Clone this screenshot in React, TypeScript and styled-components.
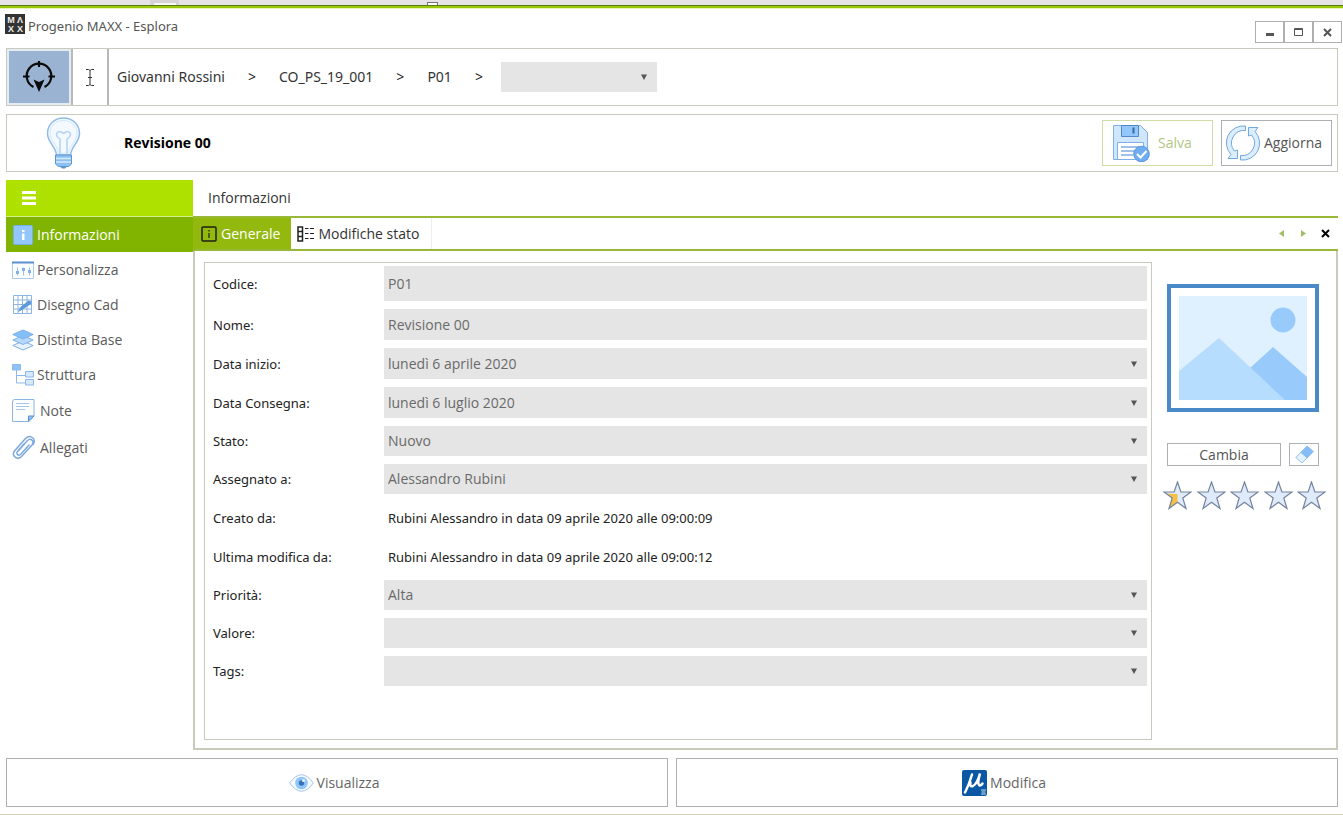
import React from "react";
import styled, { createGlobalStyle } from "styled-components";

const GlobalStyle = createGlobalStyle`
  *, *::before, *::after { box-sizing: border-box; }
  body { margin: 0; background: #fff; }
  body, button, input, select {
    font-family: "Open Sans", "Noto Sans", "Liberation Sans", sans-serif;
    font-size: 14px;
    line-height: 20px;
    color: #222;
  }
  svg { display: block; flex: none; }
`;

const wide = `"Noto Sans", "Open Sans", "Liberation Sans", sans-serif`;

const c = {
  green: "#93b90f",
  rule: "#9ab838",
  selected: "#80b400",
  lime: "#aee000",
  frame: "#c9c9be",
  frameThick: "#c9cabb",
  button: "#adafb2",
  field: "#e5e5e5",
  muted: "#6a6a6a",
};

/* ---------- window ---------- */

const Window = styled.div`
  display: flex;
  flex-direction: column;
  min-height: 100vh;
  border-bottom: 1px solid #cfd3a6;
`;

const Backdrop = styled.div`
  display: flex;
  height: 5px;
  padding-left: 150px;
  background: #e6e4e6;
`;

const BackdropTab = styled.span`
  width: 29px;
  margin-right: 248px;
  background: #f8f8f8;
  border: solid #d6d4d6;
  border-width: 3px 3px 0 4px;
`;

const BackdropBox = styled.span`
  width: 11px;
  margin-top: 2px;
  background: #fff;
  border: 1px solid #777;
  border-bottom: 0;
`;

const TitleBar = styled.header`
  display: flex;
  height: 43px;
  padding: 6px 1px 5px 5px;
  border-top: 3px solid #9cc80c;
  box-shadow: inset 0 1px 0 #e9f5b8;
`;

const DarkLine = styled.div`
  height: 1px;
  margin-bottom: -1px;
  background: #5b7a10;
  z-index: 1;
`;

const AppTitle = styled.h1`
  flex: 1;
  margin: 0;
  padding-left: 3px;
  font-family: ${wide};
  font-size: 13px;
  font-weight: 400;
  line-height: 24px;
  color: #555;
`;

const WindowControls = styled.div`
  display: flex;
  align-self: flex-end;
`;

const WindowButton = styled.button`
  display: grid;
  place-items: center;
  width: 29px;
  height: 22px;
  padding: 0;
  background: #fff;
  border: 1px solid ${c.button};
`;

const Content = styled.div`
  display: flex;
  flex: 1;
  flex-direction: column;
  gap: 8px;
  padding: 0 5px 7px 6px;
`;

const Bar = styled.section`
  display: flex;
  align-items: center;
  height: 58px;
  border: 1px solid ${c.frame};
`;

/* ---------- breadcrumb ---------- */

const ModeButton = styled.button<{ $on?: boolean }>`
  display: grid;
  place-items: center;
  align-self: stretch;
  width: ${(p) => (p.$on ? 66 : 36)}px;
  padding: 0;
  background: ${(p) => (p.$on ? "#9ab3d2" : "#fff")};
  border: 0;
  border-right: 2px solid #b9bab6;
  box-shadow: ${(p) => (p.$on ? "inset 0 0 0 2px #e3ebf3" : "none")};
`;

const Crumbs = styled.nav`
  display: flex;
  align-items: center;
  gap: 18px;
  padding-left: 3px;
  font-family: ${wide};
`;

const Crumb = styled.a`
  padding: 0 5px;
  color: #333;
  text-decoration: none;
`;

/* ---------- heading ---------- */

const HeadIcon = styled.div`
  padding-left: 39px;
`;

const RecordTitle = styled.h2`
  flex: 1;
  margin: 0;
  padding-left: 43px;
  font-size: 14px;
  font-weight: 700;
  color: #000;
`;

const HeadButtons = styled.div`
  display: flex;
  gap: 8px;
  padding-right: 5px;
`;

const HeadButton = styled.button`
  display: flex;
  align-items: center;
  gap: 3px;
  width: 111px;
  height: 46px;
  padding: 0 3px;
  color: #555;
  background: #fff;
  border: 1px solid ${c.button};
  &:disabled {
    gap: 8px;
    padding-left: 9px;
    color: #b2c583;
    border-color: #cfdca6;
  }
`;

/* ---------- sidebar ---------- */

const Workspace = styled.div`
  display: flex;
  flex: 1;
`;

const Sidebar = styled.nav`
  width: 187px;
  flex: none;
`;

const MenuToggle = styled.button`
  display: flex;
  align-items: center;
  width: 100%;
  height: 37px;
  padding: 0 16px;
  background: ${c.lime};
  border: 0;
  border-bottom: 1px solid #d5ee8c;
`;

const NavItem = styled.a<{ $active?: boolean; $tall?: boolean }>`
  display: flex;
  align-items: center;
  gap: ${(p) => (p.$tall ? 5 : 3)}px;
  height: ${(p) => (p.$tall ? 37 : 35)}px;
  padding-left: 6px;
  color: ${(p) => (p.$active ? "#fff" : "#5a5a5a")};
  background: ${(p) => (p.$active ? c.selected : "transparent")};
  text-decoration: none;
`;

/* ---------- main panel ---------- */

const Main = styled.main`
  display: flex;
  flex: 1;
  flex-direction: column;
`;

const PanelTitle = styled.h3`
  height: 36px;
  margin: 0;
  padding-left: 15px;
  font-size: 14px;
  font-weight: 400;
  line-height: 36px;
  color: #333;
`;

const TabStrip = styled.div`
  display: flex;
  align-items: stretch;
  height: 35px;
  border: solid ${c.rule};
  border-width: 2px 0;
`;

const Tab = styled.button<{ $active?: boolean }>`
  display: flex;
  align-items: center;
  gap: 4px;
  padding: ${(p) => (p.$active ? "0 10px 0 8px" : "0 12px 0 6px")};
  color: ${(p) => (p.$active ? "#fff" : "#333")};
  background: ${(p) => (p.$active ? c.green : "#fff")};
  border: 0;
  border-right: 1px solid ${(p) => (p.$active ? c.green : "#eee")};
`;

const TabTools = styled.div`
  display: flex;
  align-items: center;
  gap: 10px;
  margin-left: auto;
  padding-right: 7px;
`;

const ToolButton = styled.button`
  display: grid;
  place-items: center;
  width: 12px;
  height: 20px;
  padding: 0;
  background: none;
  border: 0;
`;

const PanelBody = styled.div`
  display: flex;
  flex: 1;
  padding: 11px 0 8px 9px;
  border: 2px solid ${c.frameThick};
  border-top: 0;
`;

const Form = styled.form`
  display: flex;
  flex: 1;
  flex-direction: column;
  gap: 8px;
  padding: 3px 4px 40px 8px;
  border: 1px solid ${c.frame};
`;

const Row = styled.div<{ $h: number }>`
  display: flex;
  align-items: center;
  height: ${(p) => p.$h}px;
`;

const Label = styled.label`
  flex: none;
  width: 171px;
  font-family: ${wide};
  font-size: 13px;
`;

const TextField = styled.input`
  flex: 1;
  min-width: 0;
  height: 100%;
  padding: 0 4px;
  color: ${c.muted};
  background: ${c.field};
  border: 0;
  border-radius: 0;
`;

const Output = styled.output`
  padding-left: 4px;
  font-family: ${wide};
  font-size: 13px;
`;

const Combo = styled.div<{ $w?: number }>`
  display: grid;
  flex: ${(p) => (p.$w ? "none" : "1")};
  align-items: center;
  width: ${(p) => (p.$w ? p.$w + "px" : "auto")};
  height: ${(p) => (p.$w ? "30px" : "100%")};
  & > * { grid-area: 1 / 1; }
  & > svg { justify-self: end; margin-right: 10px; pointer-events: none; }
`;

const Select = styled.select`
  appearance: none;
  width: 100%;
  height: 100%;
  padding: 0 24px 0 4px;
  color: ${c.muted};
  background: ${c.field};
  border: 0;
  border-radius: 0;
`;

/* ---------- preview column ---------- */

const Preview = styled.aside`
  flex: none;
  width: 184px;
  padding: 22px 10px 0 11px;
`;

const PictureFrame = styled.div`
  width: 152px;
  height: 128px;
  margin: 0 0 31px 4px;
  padding: 8px;
  border: 4px solid #4a8ac8;
`;

const PreviewActions = styled.div`
  display: flex;
  gap: 8px;
  margin: 0 7px 15px 4px;
`;

const SmallButton = styled.button<{ $grow?: boolean }>`
  display: grid;
  place-items: center;
  flex: ${(p) => (p.$grow ? "1" : "0 0 30px")};
  height: 23px;
  padding: 0;
  color: #555;
  background: #fff;
  border: 1px solid ${c.button};
`;

const Stars = styled.div`
  display: flex;
  justify-content: space-between;
`;

/* ---------- footer ---------- */

const Footer = styled.footer`
  display: flex;
  gap: 8px;
`;

const FooterButton = styled.button`
  display: flex;
  flex: 1;
  align-items: center;
  justify-content: center;
  gap: 3px;
  height: 49px;
  padding: 0 12px 0 6px;
  color: #666;
  background: #fff;
  border: 1px solid ${c.button};
`;

/* ---------- drawings ---------- */

const line = "#6b9fdb";
const sky = "#93c7fb";
const pale = "#dceefe";

const Caret = () => (
  <svg width="6" height="6" viewBox="0 0 6 6"><path d="M0 .5h6L3 6z" fill="#555" /></svg>
);

const Logo = () => (
  <svg width="20" height="20" viewBox="0 0 20 20">
    <rect width="20" height="20" fill="#333" />
    <g fill="#eee" fontFamily="Liberation Sans, sans-serif" fontSize="9" fontWeight="700" textAnchor="middle">
      <text x="6" y="9">M</text>
      <text x="15" y="9">Λ</text>
      <text x="6" y="18">X</text>
      <text x="15" y="18">X</text>
    </g>
  </svg>
);

const Target = () => (
  <svg width="32" height="32" viewBox="0 0 32 32" fill="none" stroke="#0a0a0a" strokeWidth="2.200">
    <path d="M10.500 26A12.300 12.300 0 1 1 21.500 26" />
    <path d="M16 0v6M0 15.500h6.500M25.500 15.500H32" />
    <path d="M16 31l-5.500-12.500L16 21l5.500-2.500z" fill="#0a0a0a" stroke="none" />
  </svg>
);

const TextCursor = () => (
  <svg width="10" height="19" viewBox="0 0 10 19" fill="none" stroke="#333">
    <path d="M1 1.500h2.500l1.500 1 1.500-1H9M1 17.500h2.500l1.500-1 1.500 1H9M5 2.500v14M3 9.500h4" />
  </svg>
);

const Bulb = () => (
  <svg width="35" height="52" viewBox="0 0 35 52" fill="none">
    <path d="M17.500 1C8 1 1.500 8 1.500 16.500c0 9 8 12 9 21.500h14c1-9.500 9-12.500 9-21.500C33.500 8 27 1 17.500 1z" fill="#f3f9ff" stroke="#8fbbe9" strokeWidth="1.500" />
    <path d="M17.500 3.500C10 3.500 4 9 4 16.500c0 7 7.500 12 8.500 19.500h10c1-7.500 8.500-12.500 8.500-19.500 0-7.500-6-13-13.500-13z" stroke="#d3e7fb" />
    <path d="M14 37V22l-2.500-2c-2.500-3 .5-6.500 3.500-5l2.500 1.500L20 15c3-1.500 6 2 3.500 5L21 22v15" stroke="#b5d4f5" strokeWidth="1.500" />
    <path d="M9.500 38h16v9l-3 2.500h-10l-3-2.500z" fill="#8dc0f5" stroke="#5f95cf" />
    <path d="M10 41.500h15M10 45h15" stroke="#d6eafe" strokeWidth="1.500" />
    <path d="M14 49.500h7l-2 2h-3z" fill="#5f95cf" />
  </svg>
);

const Floppy = () => (
  <svg width="38" height="38" viewBox="0 0 38 38" fill="none" stroke={line}>
    <path d="M1.500 1.500h27l7 7v27h-34z" fill="#cfe6fd" stroke="#7fafe4" />
    <path d="M9.500 1.500h17v11h-17z" fill={sky} stroke="#5489c6" />
    <path d="M21.500 3.500v6" stroke="#37689f" strokeWidth="2" />
    <path d="M5.500 18.500h26v17h-26z" fill="#fff" stroke="#7fafe4" />
    <path d="M9 23h19M9 27h13M9 31h12" stroke="#7fafe4" strokeWidth="1.500" />
    <circle cx="29.500" cy="30" r="7.800" fill="#6fadf0" stroke="#5b98da" />
    <path d="M25 30l3.500 3.500 6-6.500" stroke="#fff" strokeWidth="2" />
  </svg>
);

const Refresh = () => (
  <svg width="36" height="36" viewBox="0 0 36 36" fill={pale} stroke="#72a7df">
    <path d="M20.500 1A17 17 0 0 0 6 29.500L3 33.500h9.500V25l-3 1A12.500 12.500 0 0 1 20.500 5.500z" />
    <path d="M15.500 35A17 17 0 0 0 30 6.500L33 2.500h-9.500V11l3-1A12.500 12.500 0 0 1 15.500 30.500z" />
  </svg>
);

const Burger = () => (
  <svg width="14" height="14" viewBox="0 0 14 14"><path d="M0 0h14v3H0zM0 5.500h14v3H0zM0 11h14v3H0z" fill="#fff" /></svg>
);

const InfoTile = () => (
  <svg width="22" height="22" viewBox="0 0 22 22">
    <rect x="1.500" y="1.500" width="19" height="19" rx="1" fill={sky} stroke="#74aee8" />
    <path d="M10 6h2.500v2H10zM10 9.500h2.500V16H10z" fill="#fff" />
  </svg>
);

const Sliders = () => (
  <svg width="22" height="22" viewBox="0 0 22 22" fill="none" stroke="#8db4e0">
    <path d="M.5 3.500h21v16H.5z" fill="#fbfdff" stroke="#b0cbea" />
    <path d="M0 3.500h22" stroke="#5a8fce" strokeWidth="2" />
    <path d="M5.500 8.500v8M11.500 8.500v8M17.500 8.500v8" stroke="#9dbfe6" />
    <path d="M4 12h3v3H4zM10 9h3v3h-3zM16 11h3v3h-3z" fill="#84b0e3" stroke="none" />
  </svg>
);

const Grid = () => (
  <svg width="22" height="22" viewBox="0 0 22 22" fill="none" stroke="#8db5e2">
    <path d="M1.500 1.500h18v18h-18zM6 1v19M10.500 1v19M15 1v19M1 6h19M1 10.500h19M1 15h19" />
    <path d="M6 18l2-4.500 8.500-7 3 1-.5 2.500-9 6z" fill="#5f9ad8" stroke="none" />
  </svg>
);

const Layers = () => (
  <svg width="22" height="22" viewBox="0 0 22 22" stroke="#7fb0e6">
    <path d="M.8 16.500L11 12l10.200 4.500L11 21z" fill="#e6f2fe" />
    <path d="M.8 11L11 6.500 21.200 11 11 15.500z" fill="#b5d9fc" />
    <path d="M.8 5.500L11 1l10.200 4.500L11 10z" fill="#84bff9" />
  </svg>
);

const Tree = () => (
  <svg width="22" height="22" viewBox="0 0 22 22" fill="#d5e9fd" stroke="#8db9ea">
    <path d="M4.500 6v13h9M4.500 11.500h9" fill="none" />
    <path d="M.5.5h8v5.500h-8z" fill="#8fc2f7" />
    <path d="M13.500 7.500h8v5.500h-8zM13.500 15.500h8V21h-8z" />
  </svg>
);

const NoteIcon = () => (
  <svg width="23" height="23" viewBox="0 0 23 23" fill="none" stroke="#8db4e0">
    <path d="M.5 3q0-2.500 2-2.500H22V17l-5 5.500H.5z" fill="#fbfdff" />
    <path d="M4 4.500h13M4 7.500h13M4 10.500h9" stroke="#a9c7ea" />
    <path d="M16.500 22v-5H22z" fill={sky} stroke="#5a8fce" />
  </svg>
);

const Clip = () => (
  <svg width="23" height="25" viewBox="0 0 23 25" fill="none" stroke="#7ba9dd" strokeWidth="1.500" strokeLinecap="round">
    <path d="M17 10l-8 9c-2.500 2.500-5.500 0-3.500-2.500L15.500 5.500c3-3 7.500.5 4.500 4.500L9.500 21.500c-4 4-10.500-.5-7-5.500L13.500 3.500c5-5 11.500 1 7.500 6" />
    <path d="M12 9l-5.500 6.500" />
  </svg>
);

const InfoTab = () => (
  <svg width="16" height="16" viewBox="0 0 16 16" fill="none" stroke="#1c1f08">
    <rect x="1" y="1" width="14" height="14" rx="1" strokeWidth="1.500" />
    <path d="M8 4v1.500M8 7v5" strokeWidth="1.200" />
  </svg>
);

const StateTab = () => (
  <svg width="17" height="16" viewBox="0 0 17 16" fill="none" stroke="#222">
    <path d="M1 1h4.500v14H1zM1 5.500h4.500M1 10.500h4.500" strokeWidth="1.500" />
    <path d="M8 2.500h3.500M13 2.500h4M8 7.500h3.500M13 7.500h4M8 12.500h3.500M13 12.500h4" />
  </svg>
);

const CloseMark = ({ color }: { color: string }) => (
  <svg width="9" height="9" viewBox="0 0 9 9"><path d="M1 1l7 7M8 1L1 8" stroke={color} strokeWidth="2" /></svg>
);

const Landscape = () => (
  <svg width="128" height="104" viewBox="0 0 128 104">
    <path d="M0 0h128v104H0z" fill="#dff0ff" />
    <circle cx="104" cy="24" r="12.500" fill="#98cbfb" />
    <path d="M60 82L94 51l34 30v23H76z" fill="#98cbfb" />
    <path d="M0 75l40-33 66 62H0z" fill="#b6dcfe" />
  </svg>
);

const Eraser = () => (
  <svg width="19" height="19" viewBox="0 0 19 19" stroke="#8fc0ee">
    <path d="M.8 12.500L12 1l6.200 5.500L7 18z" fill="#e3f2fe" />
    <path d="M6 7.500L12 1l6.200 5.500-6 6.500z" fill="#84bdf5" />
  </svg>
);

const starPath = "M14.500 1l3.400 10H28l-8.200 6L23 27.500l-8.500-6.300L6 27.500 9.200 17 1 11h10.100z";
const Star = ({ half }: { half?: boolean }) => (
  <svg width="29" height="29" viewBox="0 0 29 29">
    <path d={starPath} fill="#dfeafa" />
    {half && <path d="M14.500 13v8.200L6 27.500 9.200 17 3 12.500l8 .5z" fill="#f7bf45" />}
    <path d={starPath} fill="none" stroke="#74839f" strokeWidth="1.200" />
  </svg>
);

const Eye = () => (
  <svg width="25" height="18" viewBox="0 0 25 18">
    <path d="M.7 9Q12.500-7.500 24.300 9 12.500 25.500.7 9z" fill="#f8fbff" stroke="#a3c4ea" />
    <circle cx="12.500" cy="9" r="6.300" fill="#8fc5fb" />
    <circle cx="12.500" cy="9" r="2.700" fill="#3673b8" />
    <circle cx="14.500" cy="6.500" r="1.500" fill="#e8f4ff" />
  </svg>
);

const MicroStation = () => (
  <svg width="25" height="26" viewBox="0 0 25 26">
    <rect width="25" height="26" rx="2" fill="#0a58a4" />
    <g stroke="#fff" fill="none" strokeLinecap="round">
      <path d="M10 4.500Q7 15 3 22.500" strokeWidth="2.500" />
      <path d="M8.500 12.500q-1 5 2.500 3.500Q15 14 18 3.500q-3 11-.5 12 1.500.5 3-2" strokeWidth="2.500" />
      <path d="M19.500 20h4M20 22h3M19.500 24h4" strokeWidth="1" stroke="#cfe0f2" />
    </g>
  </svg>
);

/* ---------- data ---------- */

const navItems = [
  { text: "Informazioni", icon: <InfoTile />, active: true },
  { text: "Personalizza", icon: <Sliders /> },
  { text: "Disegno Cad", icon: <Grid /> },
  { text: "Distinta Base", icon: <Layers /> },
  { text: "Struttura", icon: <Tree /> },
  { text: "Note", icon: <NoteIcon />, tall: true },
  { text: "Allegati", icon: <Clip />, tall: true },
];

type Kind = "text" | "select" | "output";
const fields: { id: string; label: string; value: string; kind: Kind; h: number }[] = [
  { id: "codice", label: "Codice:", value: "P01", kind: "text", h: 35 },
  { id: "nome", label: "Nome:", value: "Revisione 00", kind: "text", h: 31 },
  { id: "inizio", label: "Data inizio:", value: "lunedì 6 aprile 2020", kind: "select", h: 31 },
  { id: "consegna", label: "Data Consegna:", value: "lunedì 6 luglio 2020", kind: "select", h: 31 },
  { id: "stato", label: "Stato:", value: "Nuovo", kind: "select", h: 30 },
  { id: "assegnato", label: "Assegnato a:", value: "Alessandro Rubini", kind: "select", h: 30 },
  { id: "creato", label: "Creato da:", value: "Rubini Alessandro in data 09 aprile 2020 alle 09:00:09", kind: "output", h: 31 },
  { id: "modifica", label: "Ultima modifica da:", value: "Rubini Alessandro in data 09 aprile 2020 alle 09:00:12", kind: "output", h: 31 },
  { id: "priorita", label: "Priorità:", value: "Alta", kind: "select", h: 30 },
  { id: "valore", label: "Valore:", value: "", kind: "select", h: 30 },
  { id: "tags", label: "Tags:", value: "", kind: "select", h: 30 },
];

export default function App() {
  return (
    <>
      <GlobalStyle />
      <Window>
        <Backdrop><BackdropTab /><BackdropBox /></Backdrop>
        <DarkLine />
        <TitleBar>
          <Logo />
          <AppTitle>Progenio MAXX - Esplora</AppTitle>
          <WindowControls>
            <WindowButton aria-label="Riduci">
              <svg width="10" height="10" viewBox="0 0 10 10"><path d="M1 6h8v3H1z" fill="#555" /></svg>
            </WindowButton>
            <WindowButton aria-label="Ingrandisci">
              <svg width="9" height="8" viewBox="0 0 9 8"><path d="M.5.5h8v7h-8zM1 1.500h7" fill="none" stroke="#555" /></svg>
            </WindowButton>
            <WindowButton aria-label="Chiudi"><CloseMark color="#555" /></WindowButton>
          </WindowControls>
        </TitleBar>

        <Content>
          <Bar>
            <ModeButton $on aria-label="Navigazione"><Target /></ModeButton>
            <ModeButton aria-label="Testo"><TextCursor /></ModeButton>
            <Crumbs>
              <Crumb href="#cliente">Giovanni Rossini</Crumb>
              <span>&gt;</span>
              <Crumb href="#commessa">CO_PS_19_001</Crumb>
              <span>&gt;</span>
              <Crumb href="#p01">P01</Crumb>
              <span>&gt;</span>
              <Combo $w={156}>
                <Select aria-label="Livello successivo"><option></option></Select>
                <Caret />
              </Combo>
            </Crumbs>
          </Bar>

          <Bar>
            <HeadIcon><Bulb /></HeadIcon>
            <RecordTitle>Revisione 00</RecordTitle>
            <HeadButtons>
              <HeadButton disabled><Floppy />Salva</HeadButton>
              <HeadButton><Refresh />Aggiorna</HeadButton>
            </HeadButtons>
          </Bar>

          <Workspace>
            <Sidebar>
              <MenuToggle aria-label="Menu"><Burger /></MenuToggle>
              {navItems.map((n) => (
                <NavItem key={n.text} href={"#" + n.text} $active={n.active} $tall={n.tall}>
                  {n.icon}{n.text}
                </NavItem>
              ))}
            </Sidebar>

            <Main>
              <PanelTitle>Informazioni</PanelTitle>
              <TabStrip>
                <Tab $active><InfoTab />Generale</Tab>
                <Tab><StateTab />Modifiche stato</Tab>
                <TabTools>
                  <ToolButton aria-label="Scheda precedente">
                    <svg width="5" height="7" viewBox="0 0 5 7"><path d="M5 0v7L0 3.500z" fill="#a3bd62" /></svg>
                  </ToolButton>
                  <ToolButton aria-label="Scheda successiva">
                    <svg width="5" height="7" viewBox="0 0 5 7"><path d="M0 0v7l5-3.500z" fill="#a3bd62" /></svg>
                  </ToolButton>
                  <ToolButton aria-label="Chiudi scheda"><CloseMark color="#000" /></ToolButton>
                </TabTools>
              </TabStrip>
              <PanelBody>
                <Form>
                  {fields.map((f) => (
                    <Row key={f.id} $h={f.h}>
                      <Label htmlFor={f.id}>{f.label}</Label>
                      {f.kind === "text" && <TextField id={f.id} defaultValue={f.value} readOnly />}
                      {f.kind === "select" && (
                        <Combo>
                          <Select id={f.id}><option>{f.value}</option></Select>
                          <Caret />
                        </Combo>
                      )}
                      {f.kind === "output" && <Output id={f.id}>{f.value}</Output>}
                    </Row>
                  ))}
                </Form>
                <Preview>
                  <PictureFrame><Landscape /></PictureFrame>
                  <PreviewActions>
                    <SmallButton $grow>Cambia</SmallButton>
                    <SmallButton aria-label="Cancella immagine"><Eraser /></SmallButton>
                  </PreviewActions>
                  <Stars>
                    <Star half /><Star /><Star /><Star /><Star />
                  </Stars>
                </Preview>
              </PanelBody>
            </Main>
          </Workspace>

          <Footer>
            <FooterButton><Eye />Visualizza</FooterButton>
            <FooterButton><MicroStation />Modifica</FooterButton>
          </Footer>
        </Content>
      </Window>
    </>
  );
}
